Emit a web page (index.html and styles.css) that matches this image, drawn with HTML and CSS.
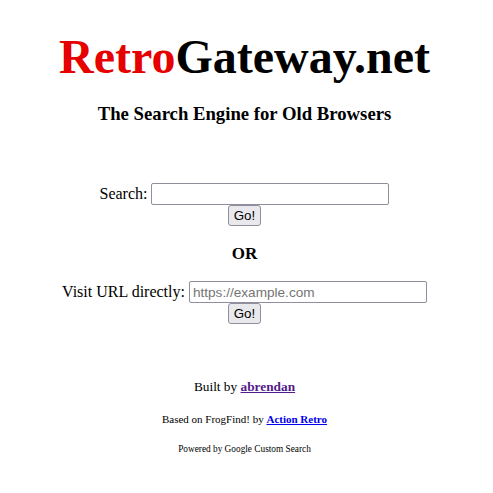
FILE: index.html
```html
<!DOCTYPE html>
<html>
<head>
<meta charset="utf-8">
<title>RetroGateway.net</title>
<link rel="stylesheet" href="styles.css">
</head>
<body>
<div class="page">
  <h1 class="logo"><span class="retro">Retro</span>Gateway.net</h1>
  <h2 class="tagline">The Search Engine for Old Browsers</h2>
  <form class="form">
    <label class="label">Search: <input class="field" type="text"></label>
    <button class="go" type="button">Go!</button>
  </form>
  <div class="or">OR</div>
  <form class="form">
    <label class="label">Visit URL directly: <input class="field" type="text" placeholder="https://example.com"></label>
    <button class="go" type="button">Go!</button>
  </form>
  <p class="built">Built by <a class="visited" href="#">abrendan</a></p>
  <p class="based">Based on FrogFind! by <a class="link" href="#">Action Retro</a></p>
  <p class="powered">Powered by Google Custom Search</p>
</div>
</body>
</html>
```

FILE: styles.css
```css
body {
  margin: 8px;
  background: #fff;
  color: #000;
  font-family: "Liberation Serif", "Times New Roman", serif;
  font-size: 16px;
}
.page {
  display: flex;
  flex-direction: column;
  align-items: center;
  text-align: center;
  padding-right: 4px;
}
.logo {
  margin: 22px 0 0;
  font-size: 48px;
  font-weight: bold;
  line-height: 53px;
}
.retro { color: #e60000; }
.tagline {
  margin: 20px 0 0;
  font-size: 18.72px;
  font-weight: bold;
  line-height: 22px;
}
.form {
  display: flex;
  flex-direction: column;
  align-items: center;
  margin: 0;
}
.form:first-of-type { margin-top: 58px; }
.label {
  display: flex;
  align-items: center;
  gap: 4px;
  line-height: 22px;
}
.field {
  box-sizing: border-box;
  width: 238px;
  height: 22px;
  margin: 0;
  padding: 1px 3px;
  border: 1px solid #8f8f9d;
  border-radius: 2px;
  font-family: "Liberation Sans", Arial, sans-serif;
  font-size: 13.6px;
  background: #fff;
}
.field::placeholder { color: #757575; }
.go {
  box-sizing: border-box;
  height: 21px;
  margin: 0;
  padding: 1px 5px;
  border: 1px solid #8f8f9d;
  border-radius: 3px;
  background: #e9e9ed;
  font-family: "Liberation Sans", Arial, sans-serif;
  font-size: 13.33px;
  color: #000;
  line-height: 17px;
}
.or {
  margin: 18px 0 17px;
  font-size: 17px;
  font-weight: bold;
  line-height: 20px;
}
.built {
  margin: 55px 0 0;
  font-size: 13.33px;
  line-height: 16px;
}
.based {
  margin: 18px 0 0;
  font-size: 11px;
  line-height: 13px;
}
.powered {
  margin: 17px 0 0;
  font-size: 9.3px;
  line-height: 12px;
}
a { font-weight: bold; }
.visited { color: #551a8b; }
.link { color: #0000ee; }
```
